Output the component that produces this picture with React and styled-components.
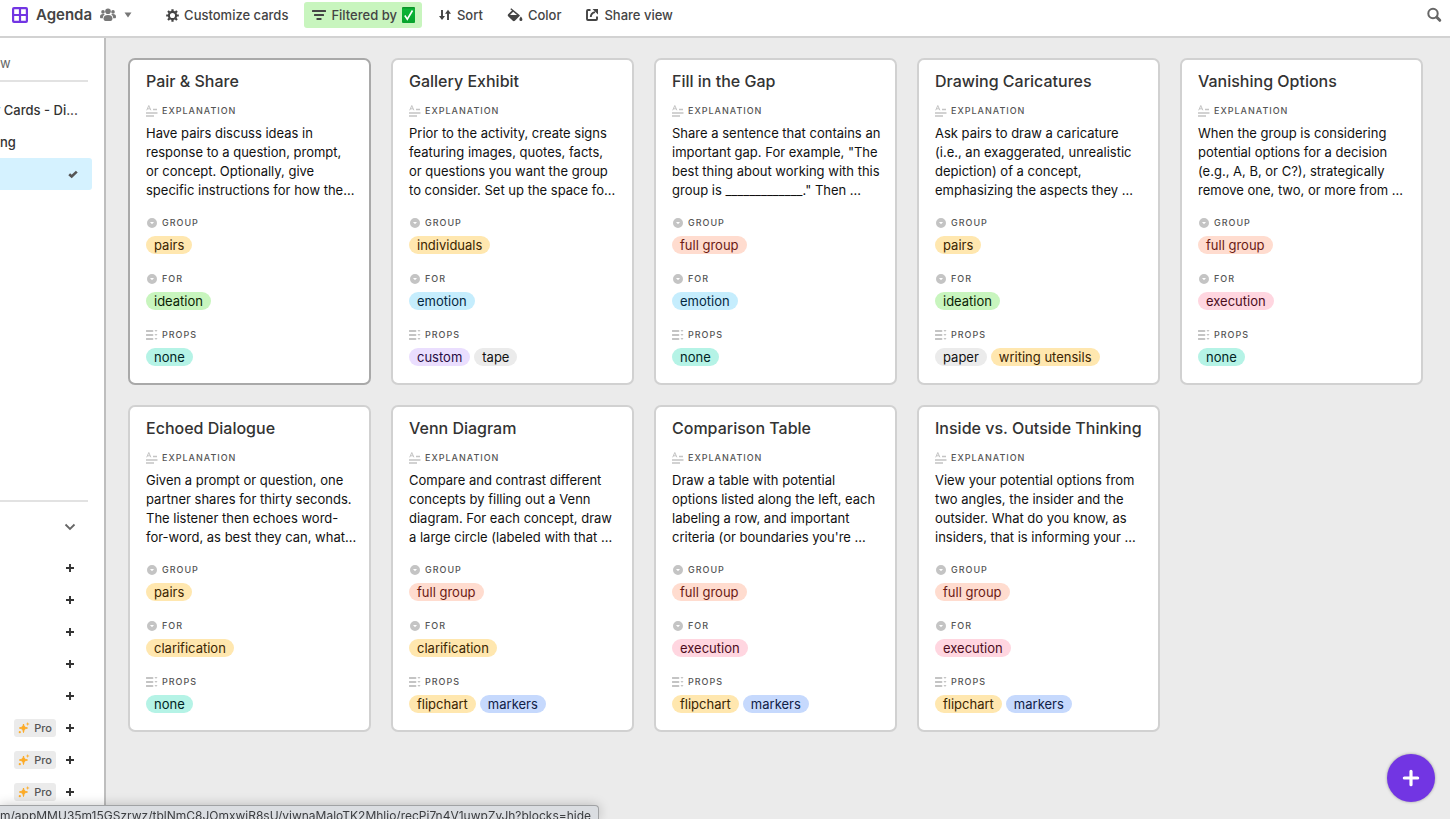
import React from "react";
import styled, { createGlobalStyle } from "styled-components";

const GlobalStyle = createGlobalStyle`
  * { box-sizing: border-box; }
  body {
    margin: 0;
    background: #ebebeb;
    color: #333;
    font-family: Inter, "Liberation Sans", sans-serif;
    font-size: 13px;
  }
  button, input { font: inherit; color: inherit; }
  button { border: 0; padding: 0; background: none; cursor: pointer; }
  h1, h2, p, ul, dl, dd { margin: 0; padding: 0; }
  svg { display: block; flex: none; }
`;

const Page = styled.div`
  display: flex;
  flex-direction: column;
  min-height: 100vh;
`;

const Toolbar = styled.header`
  display: flex;
  align-items: center;
  height: 38px;
  padding: 0 8px 6px 12px;
  background: #fff;
  border-bottom: 2px solid #d2d2d2;
  color: #444;
`;

const ViewButton = styled.button`
  display: flex;
  align-items: center;
  gap: 8px;
  margin-right: 26px;
`;

const ViewName = styled.h1`
  font-size: 15px;
  font-weight: 600;
  line-height: 20px;
`;

const ToolButton = styled.button`
  display: flex;
  align-items: center;
  gap: 5px;
  height: 26px;
  padding: 0 8px;
  margin-right: 8px;
  border-radius: 3px;
  font-weight: 500;
  line-height: 18px;
  white-space: nowrap;
  background: ${(p) => (p.$active ? "#c8f5be" : "transparent")};
`;

const FilterButton = styled(ToolButton)`
  padding-right: 7px;
`;

const SearchButton = styled.button`
  margin-left: auto;
  color: #666;
`;

const Body = styled.div`
  display: flex;
  flex: 1;
`;

const Sidebar = styled.aside`
  display: flex;
  flex-direction: column;
  flex: none;
  width: 106px;
  background: #fff;
  border-right: 2px solid #bebebe;
  overflow: hidden;
`;

const FindInput = styled.input`
  width: 88px;
  height: 44px;
  padding: 8px 0 0;
  border: 0;
  border-bottom: 2px solid #e2e2e2;
  border-radius: 0;
  outline: 0;
  background: none;
  &::placeholder { color: #666; opacity: 1; }
`;

const ViewList = styled.ul`
  flex: none;
  height: 418px;
  padding-top: 12px;
  list-style: none;
`;

const ViewItem = styled.li`
  display: flex;
  align-items: center;
  justify-content: ${(p) => (p.$clipped ? "flex-end" : "space-between")};
  width: 92px;
  height: 32px;
  padding-right: 14px;
  border-radius: 0 3px 3px 0;
  background: ${(p) => (p.$selected ? "#d5f2ff" : "transparent")};
  font-weight: 500;
  white-space: nowrap;
  overflow: hidden;
`;

const CreateSection = styled.section`
  width: 88px;
  border-top: 2px solid #e2e2e2;
`;

const CreateHeader = styled.button`
  display: flex;
  justify-content: flex-end;
  align-items: center;
  width: 100%;
  height: 50px;
  padding-right: 12px;
  color: #666;
`;

const CreateRow = styled.button`
  display: flex;
  align-items: center;
  justify-content: flex-end;
  gap: 8px;
  width: 100%;
  height: 32px;
  padding-right: 12px;
  color: #333;
`;

const ProBadge = styled.span`
  display: flex;
  align-items: center;
  gap: 4px;
  height: 18px;
  padding: 0 4px;
  border-radius: 3px;
  background: #ebebeb;
  color: #555;
  font-size: 11px;
  font-weight: 500;
`;

const Gallery = styled.main`
  flex: 1;
  display: grid;
  grid-template-columns: repeat(auto-fill, minmax(240px, 1fr));
  gap: 20px;
  align-content: start;
  padding: 20px 27px 20px 22px;
`;

const Card = styled.article`
  padding: 9px 16px 15px;
  border: 2px solid ${(p) => (p.$focused ? "#a9a9a9" : "#d1d1d1")};
  border-radius: 7px;
  background: #fff;
`;

const CardTitle = styled.h2`
  margin-bottom: 10px;
  font-size: 16px;
  font-weight: 500;
  line-height: 24px;
  white-space: nowrap;
`;

const Fields = styled.dl`
  display: flex;
  flex-direction: column;
  gap: 15px;
`;

const FieldLabel = styled.dt`
  display: flex;
  align-items: center;
  gap: 4px;
  height: 16px;
  margin-bottom: 5px;
  color: #555;
  font-size: 9px;
  font-weight: 500;
  line-height: 12px;
  letter-spacing: 1px;
  text-transform: uppercase;
  svg { color: #c4c4c4; }
`;

const LabelText = styled.span`
  padding-bottom: 1px;
`;

const Explanation = styled.dd`
  color: #111;
  line-height: 19px;
`;

const Line = styled.span`
  display: block;
  white-space: nowrap;
`;

const Tags = styled.dd`
  display: flex;
  gap: 4px;
  height: 20px;
`;

const tagColors = {
  yellow: ["#ffe7af", "#3b2501"],
  green: ["#c8f5be", "#0b1d05"],
  teal: ["#b5f3e6", "#012524"],
  blue: ["#c5edfd", "#04283f"],
  red: ["#ffdccf", "#6b1a14"],
  pink: ["#ffd6e0", "#4c0c1c"],
  purple: ["#eadefe", "#280b42"],
  gray: ["#ebebeb", "#111"],
  indigo: ["#c6d9fd", "#102046"],
};

const Tag = styled.span`
  height: 18px;
  padding: 0 8px;
  border-radius: 9px;
  line-height: 18px;
  white-space: nowrap;
  background: ${(p) => tagColors[p.$color][0]};
  color: ${(p) => tagColors[p.$color][1]};
`;

const AddButton = styled.button`
  position: fixed;
  right: 15px;
  bottom: 17px;
  display: flex;
  align-items: center;
  justify-content: center;
  width: 48px;
  height: 48px;
  border-radius: 50%;
  background: #7235e3;
  color: #fff;
  box-shadow: 0 0 3px rgba(0, 0, 0, 0.35);
`;

const StatusBar = styled.div`
  position: fixed;
  left: 0;
  bottom: 0;
  height: 14px;
  padding: 1px 7px 0 0;
  border-top: 1px solid #a0a2a4;
  border-right: 1px solid #a0a2a4;
  border-top-right-radius: 4px;
  background: #dadde1;
  color: #3b3d40;
  box-shadow: 0 0 12px rgba(0, 0, 0, 0.22);
  font-size: 12px;
  line-height: 18px;
  white-space: nowrap;
  overflow: hidden;
`;

const GridIcon = () => (
  <svg width="16" height="16" viewBox="0 0 16 16" aria-hidden="true">
    <path fill="#7235e3" fillRule="evenodd" d="M2 0h12a2 2 0 0 1 2 2v12a2 2 0 0 1-2 2H2a2 2 0 0 1-2-2V2a2 2 0 0 1 2-2zM2.200 2.200v4.700h4.700V2.200zM9.100 2.200v4.700h4.700V2.200zM2.200 9.100v4.700h4.700V9.100zM9.100 9.100v4.700h4.700V9.100z" />
  </svg>
);

const PeopleIcon = () => (
  <svg width="16" height="14" viewBox="0 0 16 14" fill="#777" aria-hidden="true">
    <circle cx="8" cy="3.300" r="2.800" />
    <circle cx="3" cy="3.900" r="1.800" />
    <circle cx="13" cy="3.900" r="1.800" />
    <path d="M3.600 10.300C3.600 8.100 5.200 6.900 8 6.900s4.400 1.200 4.400 3.400c0 1.900-.6 2.700-2 2.700H5.600c-1.400 0-2-.8-2-2.700z" />
    <path d="M0 8.700c0-1.800 1-2.600 3-2.600.8 0 1.300.1 1.800.4C3.500 7.200 2.900 8.400 2.800 10.200H1.200C.3 10.200 0 9.700 0 8.700zM16 8.700c0-1.800-1-2.600-3-2.600-.8 0-1.300.1-1.800.4 1.300.7 1.900 1.900 2 3.700h1.600c.9 0 1.200-.5 1.200-1.500z" />
  </svg>
);

const CaretIcon = () => (
  <svg width="8" height="6" viewBox="0 0 8 6" aria-hidden="true">
    <path d="M.5.500h7L4 5.500z" fill="#777" />
  </svg>
);

const GearIcon = () => (
  <svg width="13" height="13" viewBox="0 0 14 14" fill="none" stroke="currentColor" aria-hidden="true">
    <circle cx="7" cy="7" r="3.900" strokeWidth="2.300" />
    <path strokeWidth="2.400" d="M7 .2v2.200M7 11.600v2.200M.2 7h2.200M11.600 7h2.200M2.160 2.160l1.560 1.560M10.280 10.280l1.560 1.560M2.160 11.840l1.560-1.560M10.280 3.720l1.560-1.560" />
  </svg>
);

const FilterIcon = () => (
  <svg width="14" height="12" viewBox="0 0 14 12" fill="currentColor" aria-hidden="true">
    <rect width="14" height="2" y="1" rx=".5" />
    <rect x="2" y="5" width="10" height="2" rx=".5" />
    <rect x="4.500" y="9" width="5" height="2" rx=".5" />
  </svg>
);

const CheckBadgeIcon = () => (
  <svg width="13" height="16" viewBox="0 0 13 16" role="img" aria-label="checked">
    <defs>
      <linearGradient id="badge" x1="0" y1="0" x2="0" y2="1">
        <stop offset="0" stopColor="#0c8b25" />
        <stop offset=".15" stopColor="#0cb537" />
        <stop offset="1" stopColor="#06a32c" />
      </linearGradient>
    </defs>
    <rect width="13" height="16" rx="1" fill="url(#badge)" />
    <path d="M2.800 8.500l2.500 3.700L10.500 3.500" fill="none" stroke="#fff" strokeWidth="1.600" />
  </svg>
);

const SortIcon = () => (
  <svg width="14" height="14" viewBox="0 0 14 14" aria-hidden="true">
    <path d="M4 2v8.500M10 12V4" stroke="currentColor" strokeWidth="1.900" fill="none" />
    <path d="M1 8h6l-3 4zM7 5.800h6l-3-4z" fill="currentColor" />
  </svg>
);

const PaintIcon = () => (
  <svg width="16" height="14" viewBox="0 0 16 14" aria-hidden="true">
    <path fill="currentColor" fillRule="evenodd" d="M4.200.200l8.300 6.700c.4.400.4.800.1 1.200l-4.700 4.600c-.6.600-1.500.6-2.100 0L1.100 8.200c-.5-.6-.5-1.300 0-1.900L5 2.500 3.300 1.200zM6.200 3.700L3 6.900h7z" />
    <path d="M13.900 8.600c.8 1.200 1.500 2 1.500 3a1.500 1.500 0 0 1-3 0c0-1 .7-1.800 1.500-3z" fill="currentColor" />
  </svg>
);

const ShareIcon = () => (
  <svg width="14" height="14" viewBox="0 0 14 14" aria-hidden="true">
    <path d="M5.500 2H3a1 1 0 0 0-1 1v8a1 1 0 0 0 1 1h8a1 1 0 0 0 1-1V8.500" fill="none" stroke="currentColor" strokeWidth="1.900" />
    <path d="M5.800 9c0-2.600 1.200-4.200 4.200-4.900" fill="none" stroke="currentColor" strokeWidth="1.900" />
    <path d="M7.500.900H13v5.500z" fill="currentColor" />
  </svg>
);

const SearchIcon = () => (
  <svg width="16" height="16" viewBox="0 0 16 16" fill="none" stroke="currentColor" aria-hidden="true">
    <circle cx="7" cy="6.500" r="4.700" strokeWidth="2" />
    <path d="M10.800 10.300l3 3" strokeWidth="3" strokeLinecap="round" />
  </svg>
);

const CheckIcon = () => (
  <svg width="10" height="10" viewBox="0 0 10 10" aria-hidden="true">
    <path d="M1.200 5.200l2.500 2.300L8.800 2.600" fill="none" stroke="#555" strokeWidth="2.600" />
  </svg>
);

const ChevronIcon = () => (
  <svg width="12" height="8" viewBox="0 0 12 8" aria-hidden="true">
    <path d="M1.500 1.500L6 6l4.500-4.500" fill="none" stroke="currentColor" strokeWidth="1.800" />
  </svg>
);

const PlusIcon = ({ size = 12 }) => (
  <svg width={size} height={size} viewBox="0 0 12 12" aria-hidden="true">
    <path d="M6 2v8M2 6h8" transform={size === 12 ? "translate(0 0)" : undefined} fill="none" stroke="currentColor" strokeWidth="1.900" strokeLinecap={size === 12 ? "butt" : "round"} />
  </svg>
);

const SparkleIcon = () => (
  <svg width="12" height="12" viewBox="0 0 12 12" fill="#fdab26" aria-hidden="true">
    <path d="M5.500 2c.5 2.600 1.200 3.400 4 4-2.800.600-3.500 1.400-4 4.500-.500-3.100-1.200-3.900-4.200-4.500 3-.600 3.700-1.400 4.200-4z" stroke="#fdab26" strokeWidth="1" />
    <path d="M9.700 0l.5 1.500 1.500.5-1.500.5-.500 1.500-.500-1.500L7.700 2l1.500-.500z" />
    <circle cx="1.800" cy="10.200" r="1.100" />
  </svg>
);

const LongTextIcon = () => (
  <svg width="12" height="12" viewBox="0 0 12 12" aria-hidden="true">
    <path d="M.700 5.300L2.800.500l2.100 4.800M1.500 3.800h2.600" fill="none" stroke="currentColor" />
    <path d="M7 4.500h4M0 8h11.500M0 11h8" stroke="currentColor" strokeWidth="1.600" />
  </svg>
);

const SelectIcon = () => (
  <svg width="12" height="12" viewBox="0 0 12 12" aria-hidden="true">
    <path fill="currentColor" fillRule="evenodd" d="M6 1a5 5 0 1 1 0 10A5 5 0 0 1 6 1zM4 5L6 7.300 8 5z" />
  </svg>
);

const MultiSelectIcon = () => (
  <svg width="12" height="12" viewBox="0 0 12 12" aria-hidden="true">
    <path d="M.5 2H6.500M.5 6H6.500M.5 10H6.500" stroke="currentColor" strokeWidth="1.800" strokeLinecap="round" />
    <path d="M8.500 1h3L10 3zM8.500 5h3L10 7zM8.500 9h3L10 11z" fill="currentColor" />
  </svg>
);

const PAIRS = ["pairs", "yellow"];
const FULL = ["full group", "red"];
const NONE = ["none", "teal"];
const IDEATION = ["ideation", "green"];
const EMOTION = ["emotion", "blue"];
const EXECUTION = ["execution", "pink"];
const CLARIFICATION = ["clarification", "yellow"];
const FLIPCHART = ["flipchart", "yellow"];
const MARKERS = ["markers", "indigo"];

const cards = [
  {
    title: "Pair & Share",
    lines: ["Have pairs discuss ideas in", "response to a question, prompt,", "or concept. Optionally, give", "specific instructions for how the..."],
    group: PAIRS, purpose: IDEATION, props: [NONE],
  },
  {
    title: "Gallery Exhibit",
    lines: ["Prior to the activity, create signs", "featuring images, quotes, facts,", "or questions you want the group", "to consider. Set up the space fo..."],
    group: ["individuals", "yellow"], purpose: EMOTION, props: [["custom", "purple"], ["tape", "gray"]],
  },
  {
    title: "Fill in the Gap",
    lines: ["Share a sentence that contains an", "important gap. For example, \"The", "best thing about working with this", "group is _____________.\" Then ..."],
    group: FULL, purpose: EMOTION, props: [NONE],
  },
  {
    title: "Drawing Caricatures",
    lines: ["Ask pairs to draw a caricature", "(i.e., an exaggerated, unrealistic", "depiction) of a concept,", "emphasizing the aspects they ..."],
    group: PAIRS, purpose: IDEATION, props: [["paper", "gray"], ["writing utensils", "yellow"]],
  },
  {
    title: "Vanishing Options",
    lines: ["When the group is considering", "potential options for a decision", "(e.g., A, B, or C?), strategically", "remove one, two, or more from ..."],
    group: FULL, purpose: EXECUTION, props: [NONE],
  },
  {
    title: "Echoed Dialogue",
    lines: ["Given a prompt or question, one", "partner shares for thirty seconds.", "The listener then echoes word-", "for-word, as best they can, what..."],
    group: PAIRS, purpose: CLARIFICATION, props: [NONE],
  },
  {
    title: "Venn Diagram",
    lines: ["Compare and contrast different", "concepts by filling out a Venn", "diagram. For each concept, draw", "a large circle (labeled with that ..."],
    group: FULL, purpose: CLARIFICATION, props: [FLIPCHART, MARKERS],
  },
  {
    title: "Comparison Table",
    lines: ["Draw a table with potential", "options listed along the left, each", "labeling a row, and important", "criteria (or boundaries you're ..."],
    group: FULL, purpose: EXECUTION, props: [FLIPCHART, MARKERS],
  },
  {
    title: "Inside vs. Outside Thinking",
    lines: ["View your potential options from", "two angles, the insider and the", "outsider. What do you know, as", "insiders, that is informing your ..."],
    group: FULL, purpose: EXECUTION, props: [FLIPCHART, MARKERS],
  },
];

const TagField = ({ icon, label, tags }) => (
  <div>
    <FieldLabel>{icon}<LabelText>{label}</LabelText></FieldLabel>
    <Tags>
      {tags.map(([text, color]) => <Tag key={text} $color={color}>{text}</Tag>)}
    </Tags>
  </div>
);

const ActivityCard = ({ card, focused }) => (
  <Card $focused={focused}>
    <CardTitle>{card.title}</CardTitle>
    <Fields>
      <div>
        <FieldLabel><LongTextIcon /><LabelText>Explanation</LabelText></FieldLabel>
        <Explanation>
          {card.lines.map((line) => <Line key={line}>{line}</Line>)}
        </Explanation>
      </div>
      <TagField icon={<SelectIcon />} label="Group" tags={[card.group]} />
      <TagField icon={<SelectIcon />} label="For" tags={[card.purpose]} />
      <TagField icon={<MultiSelectIcon />} label="Props" tags={card.props} />
    </Fields>
  </Card>
);

const createRows = [false, false, false, false, false, true, true, true];

export default function App() {
  return (
    <Page>
      <GlobalStyle />
      <Toolbar>
        <ViewButton>
          <GridIcon />
          <ViewName>Agenda</ViewName>
          <PeopleIcon />
          <CaretIcon />
        </ViewButton>
        <ToolButton><GearIcon />Customize cards</ToolButton>
        <FilterButton $active><FilterIcon />Filtered by <CheckBadgeIcon /></FilterButton>
        <ToolButton><SortIcon />Sort</ToolButton>
        <ToolButton><PaintIcon />Color</ToolButton>
        <ToolButton><ShareIcon />Share view</ToolButton>
        <SearchButton aria-label="Search"><SearchIcon /></SearchButton>
      </Toolbar>
      <Body>
        <Sidebar>
          <FindInput placeholder="w" aria-label="Find a view" />
          <ViewList>
            <ViewItem $clipped>r Cards - Di...</ViewItem>
            <ViewItem>ng</ViewItem>
            <ViewItem $selected $clipped><CheckIcon /></ViewItem>
          </ViewList>
          <CreateSection>
            <CreateHeader aria-label="Toggle create menu"><ChevronIcon /></CreateHeader>
            {createRows.map((pro, i) => (
              <CreateRow key={i} aria-label={pro ? undefined : "Create view"}>
                {pro && <ProBadge><SparkleIcon />Pro</ProBadge>}
                <PlusIcon />
              </CreateRow>
            ))}
          </CreateSection>
        </Sidebar>
        <Gallery>
          {cards.map((card, i) => (
            <ActivityCard key={card.title} card={card} focused={i === 0} />
          ))}
        </Gallery>
      </Body>
      <AddButton aria-label="Add record"><PlusIcon size={20} /></AddButton>
      <StatusBar>m/appMMU35m15GSzrwz/tblNmC8JOmxwiR8sU/viwnaMaloTK2Mhljo/recPi7n4V1uwpZyJh?blocks=hide</StatusBar>
    </Page>
  );
}
